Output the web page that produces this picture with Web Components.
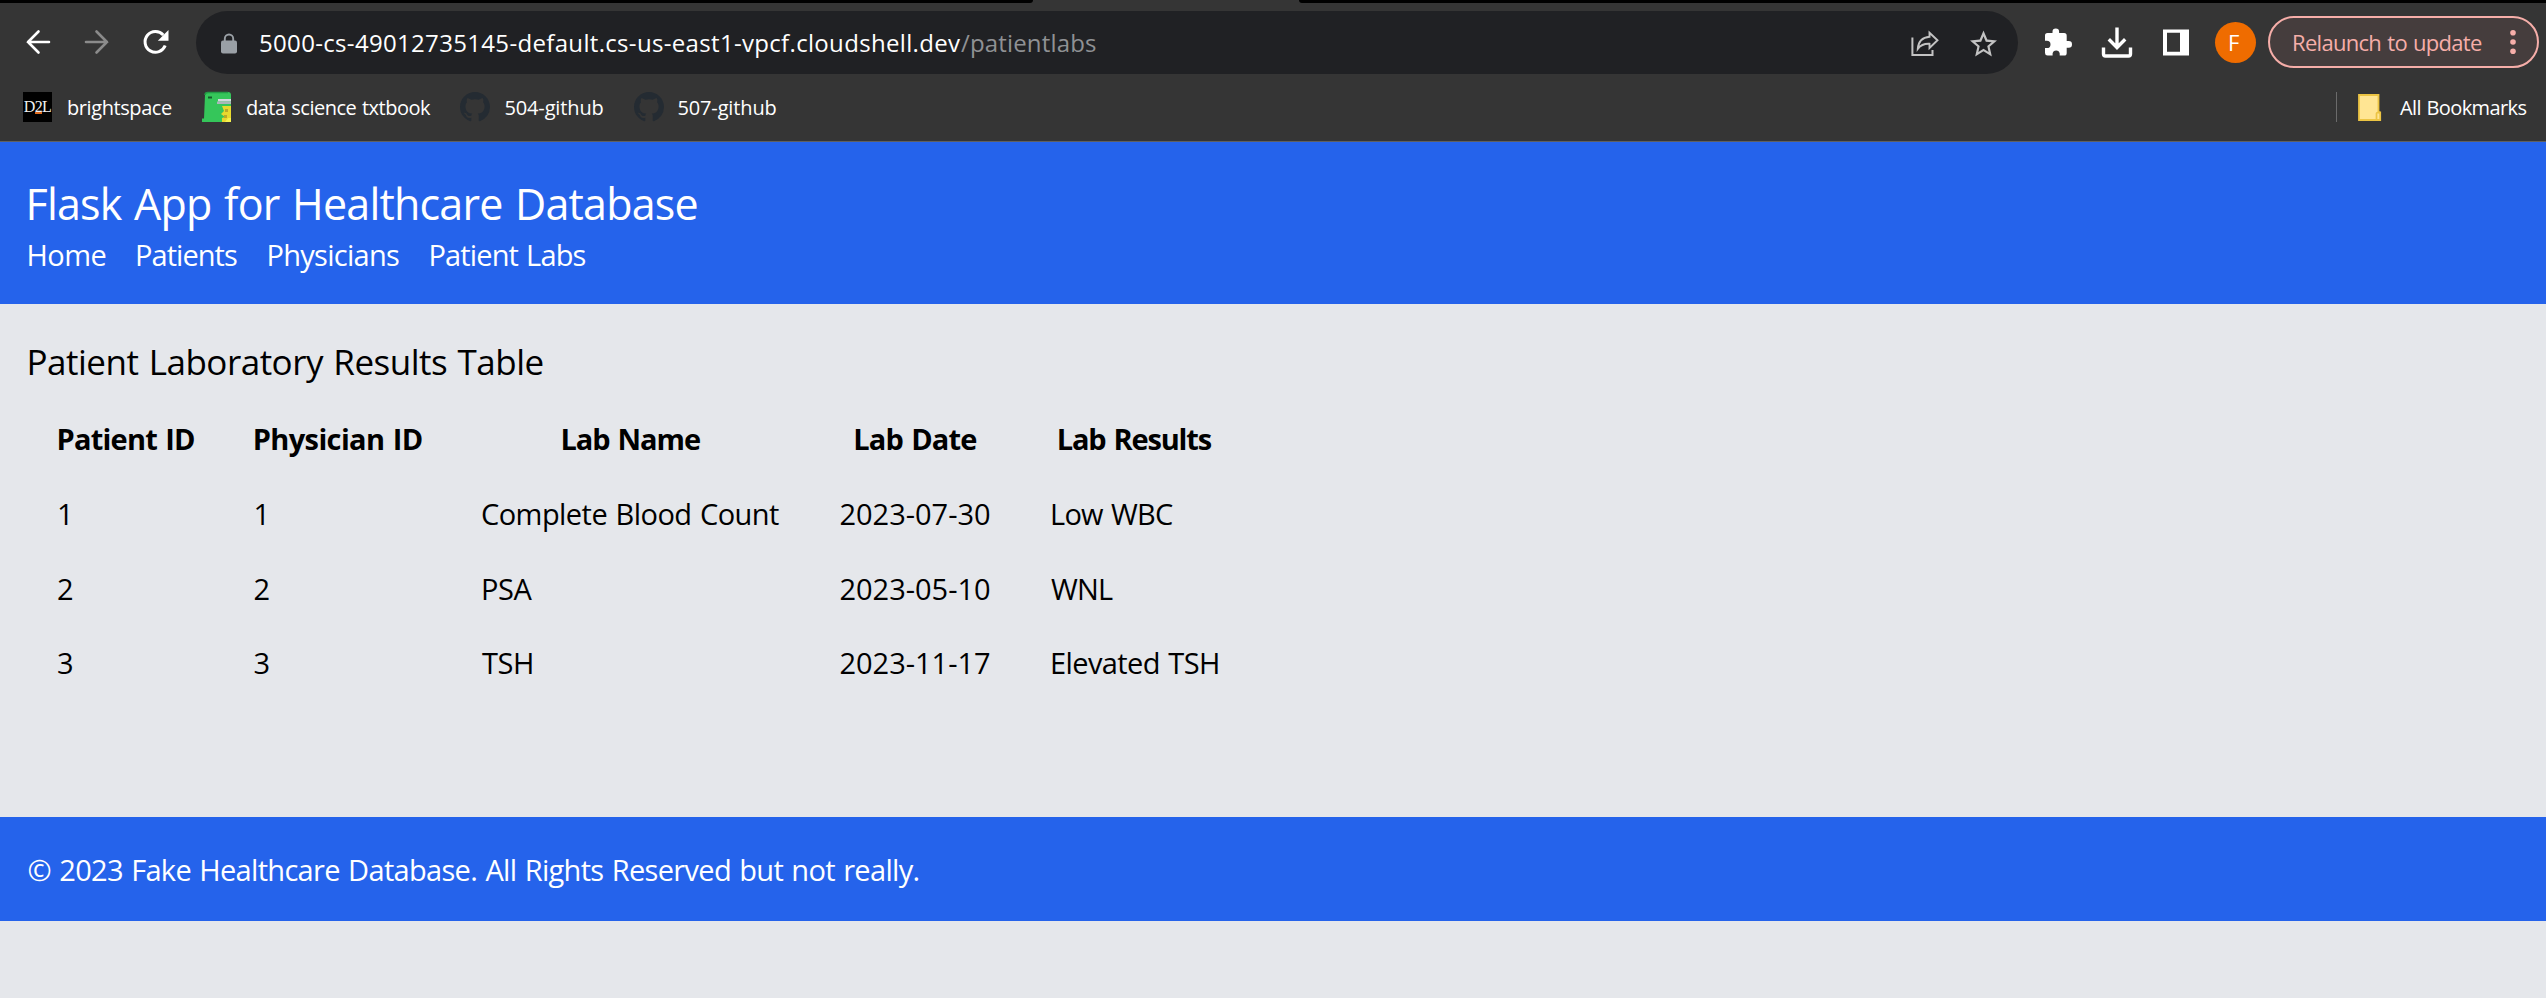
<!DOCTYPE html>
<html lang="en">
<head>
<meta charset="utf-8">
<title>Patient Labs</title>
<style>
html,body{margin:0;height:100%;overflow:hidden;background:#e5e7eb}
body{font-family:"Open Sans","Noto Sans",sans-serif;color:#000}
</style>
</head>
<body>
<lab-app></lab-app>
<script>
const define = (name, html, setup) => {
  const t = document.createElement('template');
  t.innerHTML = html;
  customElements.define(name, class extends HTMLElement {
    connectedCallback() {
      if (this.shadowRoot) return;
      this.attachShadow({mode: 'open'}).append(t.content.cloneNode(true));
      if (setup) setup(this, this.shadowRoot);
    }
  });
};

/* A line of text tracked so that its drawn width equals `span`. */
const ctx = document.createElement('canvas').getContext('2d');
define('fit-text', `<style>
:host{display:block;flex:none;white-space:nowrap}
</style><slot></slot>`, host => {
  const s = host.textContent, size = +host.getAttribute('size') || 29;
  const span = +host.getAttribute('span'), weight = host.getAttribute('weight') || 400;
  ctx.font = `${weight} ${size}px "Open Sans","Noto Sans",sans-serif`;
  const m = ctx.measureText(s);
  const word = size * .05, spaces = s.split(' ').length - 1;
  const ink = m.actualBoundingBoxLeft + m.actualBoundingBoxRight + word * spaces;
  host.style.fontSize = size + 'px';
  host.style.fontWeight = weight;
  host.style.wordSpacing = word + 'px';
  host.style.lineHeight = (host.getAttribute('line') || 44) + 'px';
  host.style.textIndent = m.actualBoundingBoxLeft + 'px';
  if (span) {
    host.style.width = span + 'px';
    if (s.length > 1) host.style.letterSpacing = (span - ink) / (s.length - 1) + 'px';
  }
});

const icons = {
  back: [24, 24, '<path d="M23 12H2M12.500 1.500L2 12l10.500 10.500" fill="none" stroke="currentColor" stroke-width="2.600" stroke-linecap="round"/>'],
  forward: [24, 24, '<path d="M1 12h21M11.500 1.500L22 12 11.500 22.500" fill="none" stroke="currentColor" stroke-width="2.600" stroke-linecap="round"/>'],
  reload: [26, 24, '<path d="M22.200 15.500A10.400 10.400 0 1 1 20.300 5" fill="none" stroke="currentColor" stroke-width="3"/><path d="M25.500 0v10.800H14.800z" fill="currentColor"/>'],
  lock: [16, 20, '<rect y="7" width="16" height="13" rx="2" fill="currentColor"/><path d="M3.800 8V5.200a4.200 4.200 0 0 1 8.400 0V8" fill="none" stroke="currentColor" stroke-width="1.900"/>'],
  share: [28, 26, '<path d="M1.400 7v17.500H21.500V19.500" fill="none" stroke="currentColor" stroke-width="2"/><path d="M18.500 2.200L26.500 9.800l-8 7.700v-4.200c-5.500-.3-9 1.500-11.700 5C7.300 11.500 11 6.900 18.500 6.300z" fill="none" stroke="currentColor" stroke-width="1.900"/>'],
  star: [27, 26, '<path fill="currentColor" fill-rule="evenodd" d="M27 9.900l-9.700-.85L13.500 0 9.700 9.050 0 9.900l7.370 6.430L5.150 26l8.350-5.150L21.850 26l-2.200-9.670zM13.500 18.300l-5.100 3.100 1.350-5.850-4.480-3.900 5.920-.52L13.500 5.700l2.310 5.430 5.920.52-4.480 3.900 1.350 5.850z"/>'],
  puzzle: [27, 27, '<path fill="currentColor" d="M23.700 12.600h-2v-5.300a2.700 2.700 0 0 0-2.600-2.700h-5V3.300a3.300 3.300 0 0 0-6.600 0v1.300h-5A2.600 2.600 0 0 0 0 7.300v5h1.900a3.600 3.600 0 0 1 0 7.200H0v5A2.600 2.600 0 0 0 2.600 27h5v-1.900a3.600 3.600 0 0 1 7.100 0V27h4.400a2.600 2.600 0 0 0 2.600-2.600v-5.200h2a3.300 3.300 0 0 0 0-6.600z"/>'],
  download: [30, 30, '<path d="M15 0v20M6.800 11.800l8.200 8.200 8.200-8.200M1.500 20v6.500a2 2 0 0 0 2 2h23a2 2 0 0 0 2-2V20" fill="none" stroke="currentColor" stroke-width="3.400"/>'],
  panel: [26, 26, '<path fill="currentColor" fill-rule="evenodd" d="M0 0h26v26H0zM4 3.200v19h13v-19z"/>'],
  dots: [6, 24, '<g fill="currentColor"><circle cx="3" cy="2.800" r="2.800"/><circle cx="3" cy="12" r="2.800"/><circle cx="3" cy="21.200" r="2.800"/></g>'],
  folder: [23, 27, '<path d="M1 1h19.500v17.500h1.700V26H1z" fill="#ffe593" stroke="#ecc443" stroke-width="1.800"/><path d="M18.500 26v-6.500q0-1.500 3.700-1.200" fill="none" stroke="#ecc443" stroke-width="1.700"/>'],
  github: [30, 30, '<path transform="scale(1.875)" fill="#242b32" d="M8 0C3.580 0 0 3.580 0 8c0 3.540 2.290 6.530 5.470 7.590.4.070.55-.17.55-.38 0-.19-.01-.82-.01-1.490-2.010.37-2.530-.49-2.690-.94-.09-.23-.48-.94-.82-1.130-.28-.15-.68-.52-.01-.53.63-.01 1.080.58 1.230.82.72 1.210 1.870.87 2.330.66.07-.52.28-.87.51-1.070-1.780-.2-3.640-.89-3.640-3.950 0-.87.31-1.590.82-2.150-.08-.2-.36-1.020.08-2.120 0 0 .67-.21 2.200.82.64-.18 1.320-.27 2-.27s1.360.09 2 .27c1.530-1.040 2.200-.82 2.200-.82.44 1.100.16 1.920.08 2.120.51.56.82 1.270.82 2.150 0 3.070-1.870 3.750-3.650 3.950.29.25.54.73.54 1.480 0 1.070-.01 1.930-.01 2.200 0 .21.15.46.55.38A8.010 8.010 0 0 0 16 8c0-4.420-3.580-8-8-8z"/>'],
  book: [30, 30, '<path d="M3 3Q3 0 6 0h20q3 0 3 3v27H0v-3.500h2z" fill="#35c65a"/><path d="M3 3q0-2.500 3-2.500h20" fill="none" stroke="#239a45" stroke-width="1.500"/><path d="M6 4.500h4v2H6z" fill="#175c2c"/><path d="M16 7h13v2.500H16z" fill="#d4d8df"/><path d="M15 9.500h14V12H15z" fill="#a9b7b9"/><path d="M20 14h9v12q0 4-5 4h-4v-4l3-1-4-3 3-3z" fill="#e8d92e"/><path d="M23 17h3v3h-3zM22 23h3v3h-3z" fill="#b9a82a"/><path d="M26 26h3v4h-6z" fill="#f5f04e"/>']
};
define('ui-icon', `<style>:host{display:block;flex:none}svg{display:block;overflow:visible}</style>`, (h, r) => {
  const [w, ht, body] = icons[h.getAttribute('name')];
  r.innerHTML += `<svg width="${w}" height="${ht}" viewBox="0 0 ${w} ${ht}">${body}</svg>`;
});

define('d2l-badge', `<style>
:host{display:flex;flex-direction:column;align-items:center;width:29px;height:30px;background:#000;flex:none;font-family:"Liberation Serif",serif;font-size:16px;line-height:30px;color:#f0f0f0;position:relative}
span{letter-spacing:-.6px}
i{position:absolute;left:12px;top:20px;width:7px;height:2px;background:#dd6b20}
</style><span>D2L</span><i></i>`);

define('tab-strip', `<style>
:host{display:flex;justify-content:space-between;height:3px;background:#353535}
div{background:#000;height:3px}
.a{width:1033px;border-bottom-right-radius:3px}.b{width:1247px;border-bottom-left-radius:3px}
</style><div class="a"></div><div class="b"></div>`);

define('address-bar', `<style>
:host{box-sizing:border-box;display:flex;align-items:center;width:1822px;height:63px;border-radius:32px;background:#202124;color:#fff;padding:0 21px 0 25px;flex:none}
.lock{color:#9aa0a6;margin-right:23px}
.path{color:#8f9194;margin-left:1px}
.act{color:#c3c3c3;display:flex;align-items:center;gap:31px;margin-left:auto}
.lock,.act{transform:translateY(.5px)}
</style>
<ui-icon class="lock" name="lock"></ui-icon>
<fit-text size="24" span="700" line="62">5000-cs-49012735145-default.cs-us-east1-vpcf.cloudshell.dev</fit-text>
<fit-text class="path" size="24" span="135" line="62">/patientlabs</fit-text>
<div class="act"><ui-icon name="share"></ui-icon><ui-icon name="star"></ui-icon></div>`);

define('relaunch-button', `<style>
:host{box-sizing:border-box;display:flex;align-items:center;width:271px;height:52px;border:2px solid #f6aea9;border-radius:26px;background:#453d3d;color:#f6aea9;padding-left:24px;flex:none}
ui-icon{margin-left:28px}
</style><fit-text size="22" span="188" line="46">Relaunch to update</fit-text><ui-icon name="dots"></ui-icon>`);

define('nav-toolbar', `<style>
:host{display:flex;height:78px;align-items:flex-start;color:#fff}
.n{display:flex;padding:27px 0 0 26px;width:170px;flex:none}
.n>:nth-child(2){margin-left:35px;color:#8b8b8b}.n>:nth-child(3){margin-left:34px}
address-bar{margin-top:8px}
.r{display:flex;align-items:center;height:78px}
.puz{margin:-1px 30px 0 27px}.dl{margin-right:31px}.pan{margin-right:26px}
.av{width:41px;height:41px;border-radius:50%;background:#ef6c00;display:flex;justify-content:center;align-items:center;margin-right:12px}
.puz,.dl,.pan{transform:translateY(.5px)}
</style>
<div class="n"><ui-icon name="back"></ui-icon><ui-icon name="forward"></ui-icon><ui-icon name="reload"></ui-icon></div>
<address-bar></address-bar>
<div class="r"><ui-icon class="puz" name="puzzle"></ui-icon><ui-icon class="dl" name="download"></ui-icon><ui-icon class="pan" name="panel"></ui-icon>
<div class="av"><fit-text size="22" span="11" line="40">F</fit-text></div><relaunch-button></relaunch-button></div>`);

define('bookmarks-bar', `<style>
:host{display:flex;align-items:center;height:52px;color:#fff;padding:0 19.500px 0 23px}
.f{display:flex;flex:none;align-items:center}
.f>:first-child{margin-right:16px}
.all{margin-left:auto;display:flex;align-items:center}
.all i{width:1px;height:30px;background:#6b6b6b;margin-right:21px}
.all ui-icon{margin-right:19px}
fit-text{padding-top:1px}
</style>
<div class="f"><d2l-badge></d2l-badge><fit-text size="20" span="104" line="30">brightspace</fit-text></div>
<div class="f" style="margin-left:30px"><ui-icon name="book"></ui-icon><fit-text size="20" span="184" line="30" style="margin-left:-1px">data science txtbook</fit-text></div>
<div class="f" style="margin-left:29px"><ui-icon name="github"></ui-icon><fit-text size="20" span="98" line="30" style="margin-left:-.5px">504-github</fit-text></div>
<div class="f" style="margin-left:30px"><ui-icon name="github"></ui-icon><fit-text size="20" span="98" line="30" style="margin-left:-1px">507-github</fit-text></div>
<div class="all"><i></i><ui-icon name="folder"></ui-icon><fit-text size="20" span="126.500" line="30">All Bookmarks</fit-text></div>`);

define('browser-chrome', `<style>
:host{box-sizing:border-box;display:block;height:142px;background:#353535;border-bottom:1px solid #606060}
</style><tab-strip></tab-strip><nav-toolbar></nav-toolbar><bookmarks-bar></bookmarks-bar>`);

define('site-header', `<style>
:host{box-sizing:border-box;display:block;height:162px;background:#2563eb;color:#fff;padding:34px 28.500px 0}
nav{display:flex;margin-top:1px;gap:31.500px}
</style>
<fit-text size="43" span="667" line="56" style="margin-left:1px">Flask App for Healthcare Database</fit-text>
<nav><fit-text span="77">Home</fit-text><fit-text span="100">Patients</fit-text><fit-text span="130.500">Physicians</fit-text><fit-text span="155">Patient Labs</fit-text></nav>`);

define('lab-table', `<style>
:host{display:grid;grid-template-columns:137px 169px 299px 152px 169px;grid-auto-rows:74.700px;column-gap:59px;align-items:center}
.h{justify-self:center;padding-left:1.500px}
</style>`, (h, r) => {
  const head = [['Patient ID', 135.5], ['Physician ID', 167], ['Lab Name', 137.5], ['Lab Date', 121], ['Lab Results', 153]];
  const rows = [
    [['1', 8, 2], ['1', 8, 2.5], ['Complete Blood Count', 297, 1], ['2023-07-30', 149.5, 1.5], ['Low WBC', 121, 2]],
    [['2', 13, 1], ['2', 13, 1.5], ['PSA', 49.5, 2], ['2023-05-10', 149.5, 1.5], ['WNL', 62, 1]],
    [['3', 13, 1], ['3', 13, 1.5], ['TSH', 50, 1], ['2023-11-17', 149.5, 1.5], ['Elevated TSH', 166, 2]]
  ];
  r.innerHTML += head.map(([t, w]) => `<fit-text class="h" weight="700" span="${w}">${t}</fit-text>`).join('') +
    rows.flat().map(([t, w, m]) => `<fit-text span="${w}" style="margin-left:${m}px">${t}</fit-text>`).join('');
});

define('lab-results', `<style>
:host{box-sizing:border-box;display:block;height:513px;padding:32px 0 0 28.500px}
lab-table{margin:14px 0 0 28.500px}
</style><fit-text size="35" span="513" line="52" style="margin-left:1px">Patient Laboratory Results Table</fit-text><lab-table></lab-table>`);

define('site-footer', `<style>
:host{box-sizing:border-box;display:flex;align-items:center;height:104px;background:#2563eb;color:#fff;padding:2px 0 0 28.500px}
</style><fit-text span="890">© 2023 Fake Healthcare Database. All Rights Reserved but not really.</fit-text>`);

define('lab-app', `<style>:host{display:block}</style>
<browser-chrome></browser-chrome><site-header></site-header><lab-results></lab-results><site-footer></site-footer>`);
</script>
</body>
</html>
